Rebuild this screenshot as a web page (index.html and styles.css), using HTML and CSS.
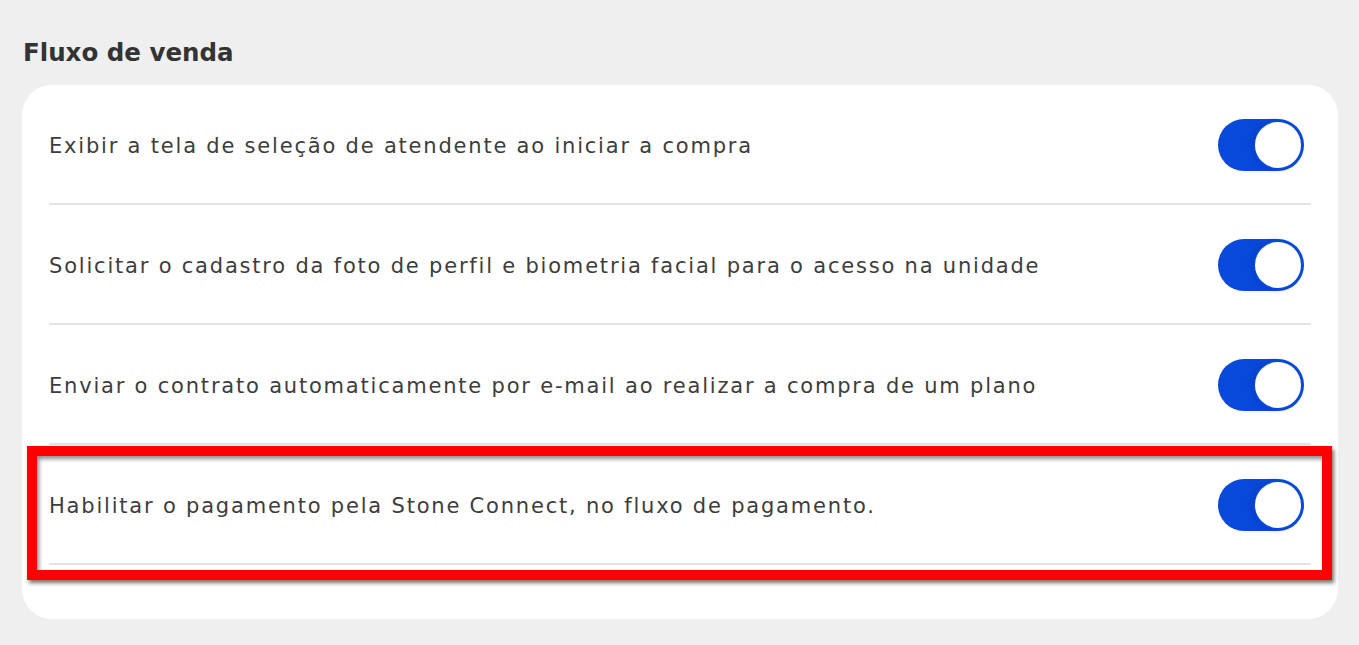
FILE: index.html
```html
<!DOCTYPE html>
<html lang="pt-BR">
<head>
<meta charset="utf-8">
<title>Fluxo de venda</title>
<link rel="stylesheet" href="styles.css">
</head>
<body>
<main class="page">
  <h2 class="section-title">Fluxo de venda</h2>
  <section class="card">
    <div class="row">
      <span class="row-label">Exibir a tela de seleção de atendente ao iniciar a compra</span>
      <span class="toggle on"><span class="knob"></span></span>
    </div>
    <div class="row">
      <span class="row-label">Solicitar o cadastro da foto de perfil e biometria facial para o acesso na unidade</span>
      <span class="toggle on"><span class="knob"></span></span>
    </div>
    <div class="row">
      <span class="row-label">Enviar o contrato automaticamente por e-mail ao realizar a compra de um plano</span>
      <span class="toggle on"><span class="knob"></span></span>
    </div>
    <div class="row highlighted">
      <span class="row-label">Habilitar o pagamento pela Stone Connect, no fluxo de pagamento.</span>
      <span class="toggle on"><span class="knob"></span></span>
      <span class="highlight-box"></span>
    </div>
  </section>
</main>
</body>
</html>
```

FILE: styles.css
```css
* { box-sizing: border-box; }
html, body {
  margin: 0;
  padding: 0;
  background: #efefef;
}
body {
  font-family: "DejaVu Sans", "Open Sans", sans-serif;
  color: #3a3a3a;
}
.page {
  padding: 35px 21px 26px 22px;
}
.section-title {
  margin: 0 0 15px 1px;
  font-size: 24.5px;
  line-height: 35px;
  font-weight: 700;
  color: #333333;
  letter-spacing: 0;
}
.card {
  background: #ffffff;
  border-radius: 30px;
  padding: 0 27px 54px 27px;
}
.row {
  position: relative;
  display: flex;
  align-items: center;
  justify-content: space-between;
  height: 120px;
  border-bottom: 2px solid #e3e3e3;
  padding-top: 4px;
}
.row-label {
  font-size: 21px;
  letter-spacing: 1.8px;
  color: #3d3d3d;
}
.toggle {
  position: relative;
  display: block;
  width: 86px;
  height: 52px;
  border-radius: 26px;
  background: #0849dc;
  margin-right: 7px;
  margin-top: -2px;
  flex: none;
}
.knob {
  position: absolute;
  top: 1px;
  right: 1px;
  width: 50px;
  height: 50px;
  border-radius: 50%;
  background: #ffffff;
  border: 2px solid #0849dc;
  box-shadow: -2px 0 4px rgba(0, 30, 120, 0.25);
}
.highlight-box {
  position: absolute;
  left: -22px;
  right: -21px;
  top: 1px;
  bottom: -17px;
  border: 10px solid #ff0000;
  box-shadow: 2px 3px 4px rgba(0, 0, 0, 0.55), inset 2px 3px 4px rgba(0, 0, 0, 0.45);
  pointer-events: none;
}
```
